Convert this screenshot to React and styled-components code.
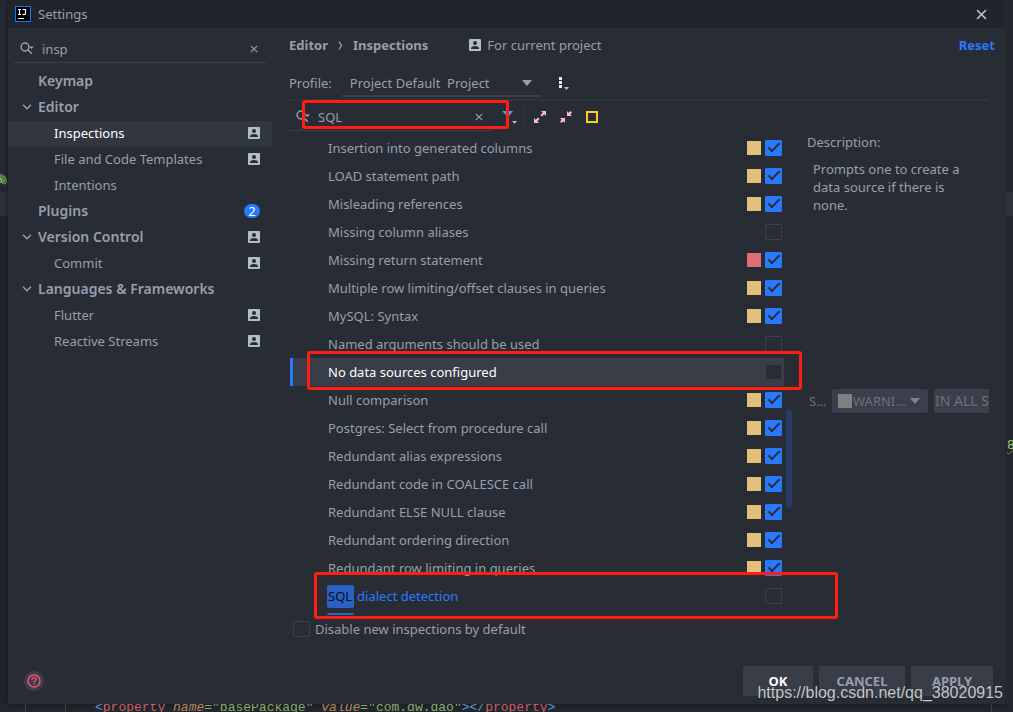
import styled, { createGlobalStyle } from 'styled-components';

const treeItems = [
  { label: 'Keymap', level: 0 },
  { label: 'Editor', level: 0, open: true },
  { label: 'Inspections', level: 1, project: true, selected: true },
  { label: 'File and Code Templates', level: 1, project: true },
  { label: 'Intentions', level: 1 },
  { label: 'Plugins', level: 0, count: 2 },
  { label: 'Version Control', level: 0, open: true, project: true },
  { label: 'Commit', level: 1, project: true },
  { label: 'Languages & Frameworks', level: 0, open: true },
  { label: 'Flutter', level: 1, project: true },
  { label: 'Reactive Streams', level: 1, project: true },
];

const WARNING = '#e5c07b';
const ERROR = '#e06c75';

const inspections = [
  { name: 'Insertion into generated columns', severity: WARNING },
  { name: 'LOAD statement path', severity: WARNING },
  { name: 'Misleading references', severity: WARNING },
  { name: 'Missing column aliases' },
  { name: 'Missing return statement', severity: ERROR },
  { name: 'Multiple row limiting/offset clauses in queries', severity: WARNING },
  { name: 'MySQL: Syntax', severity: WARNING },
  { name: 'Named arguments should be used' },
  { name: 'No data sources configured', selected: true },
  { name: 'Null comparison', severity: WARNING },
  { name: 'Postgres: Select from procedure call', severity: WARNING },
  { name: 'Redundant alias expressions', severity: WARNING },
  { name: 'Redundant code in COALESCE call', severity: WARNING },
  { name: 'Redundant ELSE NULL clause', severity: WARNING },
  { name: 'Redundant ordering direction', severity: WARNING },
  { name: 'Redundant row limiting in queries', severity: WARNING },
  { name: 'dialect detection', match: 'SQL' },
  { name: '', match: 'SQL' },
];

const ProjectIcon = () => (
  <svg width="12" height="12" viewBox="0 0 12 12" aria-hidden="true">
    <rect width="12" height="12" rx="1" fill="#b0bec5" />
    <circle cx="6" cy="4" r="2" fill="#282c34" />
    <path d="M2 10V9.2C2 7.8 4.4 7 6 7s4 .8 4 2.2v.8z" fill="#282c34" />
  </svg>
);

const SearchIcon = () => (
  <svg width="15" height="14" viewBox="0 0 15 14" fill="none" aria-hidden="true">
    <circle cx="5" cy="5" r="3.9" stroke="#979fad" strokeWidth="1.5" />
    <path d="M7.8 7.8l4 4" stroke="#979fad" strokeWidth="1.6" />
    <path d="M9 4.5h5L11.5 7z" fill="#979fad" />
  </svg>
);

const CloseIcon = ({ size = 8, color = '#979fad' }) => (
  <svg width={size} height={size} viewBox="0 0 10 10" aria-hidden="true">
    <path d="M1 1l8 8M9 1L1 9" stroke={color} strokeWidth="1.4" />
  </svg>
);

const ChevronIcon = () => (
  <svg width="10" height="6" viewBox="0 0 10 6" fill="none" aria-hidden="true">
    <path d="M1 .8l4 4 4-4" stroke="#979fad" strokeWidth="1.5" />
  </svg>
);

const SeparatorIcon = () => (
  <svg width="5" height="9" viewBox="0 0 5 9" fill="none" aria-hidden="true">
    <path d="M1 .5l2.500 4L1 8.500" stroke="#979fad" strokeWidth="1.3" />
  </svg>
);

const ArrowIcon = ({ color = '#979fad' }) => (
  <svg width="10" height="6" viewBox="0 0 10 6" aria-hidden="true">
    <path d="M0 0h10L5 6z" fill={color} />
  </svg>
);

const LogoIcon = () => (
  <svg width="16" height="16" viewBox="0 0 16 16" aria-hidden="true">
    <rect x=".5" y=".5" width="15" height="15" fill="#000" stroke="#087cfa" />
    <path
      d="M3 3.500h3M4.500 3.500v5M3 8.500h3M7.500 3.500h3v3.700c0 1-.6 1.400-1.400 1.400-.7 0-1.200-.3-1.600-.8M3 12.500h6"
      fill="none"
      stroke="#fff"
      strokeWidth="1.2"
    />
  </svg>
);

const FilterIcon = () => (
  <svg width="16" height="16" viewBox="0 0 16 16" aria-hidden="true">
    <path d="M0 2h11L7 7v6H5V7z" fill="#42a5f5" />
    <path d="M10 12h5l-2.500 3z" fill="#b0bec5" />
  </svg>
);

const MoreIcon = () => (
  <svg width="12" height="16" viewBox="0 0 12 16" aria-hidden="true">
    <path d="M1 2h3v3H1zM1 6h3v3H1zM1 10h3v3H1z" fill="#e8eaf0" />
    <path d="M6 12h5l-2.500 3z" fill="#b0bec5" />
  </svg>
);

const ExpandIcon = () => (
  <svg width="12" height="12" viewBox="0 0 12 12" aria-hidden="true">
    <path
      d="M7 0h5v5l-1.700-1.700L8 5.600 6.400 4l2.300-2.300zM5 12H0V7l1.700 1.700L4 6.400 5.600 8l-2.300 2.300z"
      fill="#f8bbd0"
    />
  </svg>
);

const CollapseIcon = () => (
  <svg width="12" height="12" viewBox="0 0 12 12" aria-hidden="true">
    <path
      d="M7 5V0l1.700 1.700L10.400 0 12 1.600l-1.700 1.700L12 5zM5 7v5l-1.700-1.700L1.600 12 0 10.400l1.700-1.700L0 7z"
      fill="#f8bbd0"
    />
  </svg>
);

const HelpIcon = () => (
  <svg width="14" height="14" viewBox="0 0 14 14" fill="none" aria-hidden="true">
    <circle cx="7" cy="7" r="6" stroke="#ef5370" strokeWidth="1.5" />
    <path
      d="M5 5.700C5 4.400 5.800 3.700 7 3.700s2 .7 2 1.700c0 1.300-2 1.600-2 3.100M7 9.500v1.300"
      stroke="#ef5370"
      strokeWidth="1.3"
    />
  </svg>
);

const LeafIcon = () => (
  <svg width="7" height="14" viewBox="0 0 7 14" aria-hidden="true">
    <path d="M0 1c4 0 7 3 7 7 0 2-1 3-2 4L0 6z" fill="#4f8a3c" />
    <path d="M0 5l3 6M0 10l2-3" stroke="#b0bec5" fill="none" />
  </svg>
);

const SettingsTree = () => (
  <Sidebar>
    <SideSearch>
      <SearchIcon />
      <SearchInput type="text" aria-label="Search settings" defaultValue="insp" />
      <IconButton type="button" aria-label="Clear search">
        <CloseIcon />
      </IconButton>
    </SideSearch>
    <Tree>
      {treeItems.map((item) => (
        <TreeRow key={item.label} href="#" $level={item.level} $selected={item.selected}>
          <TreeToggle $level={item.level}>{item.open && <ChevronIcon />}</TreeToggle>
          <TreeLabel>{item.label}</TreeLabel>
          {item.project && <ProjectIcon />}
          {item.count && <Count>{item.count}</Count>}
        </TreeRow>
      ))}
    </Tree>
  </Sidebar>
);

const InspectionList = () => (
  <ListWrap>
    <List>
      {inspections.map((item, i) => (
        <InspectionRow key={i} $selected={item.selected}>
          <InspectionName htmlFor={`inspection-${i}`} $matched={item.match}>
            {item.match && <Match>{item.match}</Match>}
            {item.name}
          </InspectionName>
          {item.severity && <Severity $color={item.severity} />}
          <Checkbox
            id={`inspection-${i}`}
            type="checkbox"
            defaultChecked={!!item.severity}
            $filled={item.selected}
          />
        </InspectionRow>
      ))}
    </List>
    <ScrollTrack>
      <ScrollThumb />
    </ScrollTrack>
    <SelectedMark />
    <DialectMark />
  </ListWrap>
);

const Details = () => (
  <DetailsColumn>
    <div>Description:</div>
    <Description>Prompts one to create a data source if there is none.</Description>
    <SeverityRow>
      <SeverityLabel htmlFor="severity">S...</SeverityLabel>
      <SeverityBox>
        <Severity $color="#808080" />
        <SeveritySelect id="severity" disabled>
          <option>WARNI...</option>
        </SeveritySelect>
        <ArrowIcon color="#7d828c" />
      </SeverityBox>
      <ScopeButton type="button" disabled>
        IN ALL SCOPES
      </ScopeButton>
    </SeverityRow>
  </DetailsColumn>
);

const App = () => {
  return (
    <Ide>
      <GlobalStyle />
      <LeftGutter>
        <LeafIcon />
      </LeftGutter>
      <Dialog>
        <TitleBar>
          <LogoIcon />
          <Title>Settings</Title>
          <IconButton type="button" aria-label="Close">
            <CloseIcon size={11} color="#b0bec5" />
          </IconButton>
        </TitleBar>
        <DialogBody>
          <SettingsTree />
          <Content>
            <Breadcrumbs>
              <b>Editor</b>
              <SeparatorIcon />
              <b>Inspections</b>
              <Scope>
                <ProjectIcon />
                For current project
              </Scope>
              <Reset href="#">Reset</Reset>
            </Breadcrumbs>
            <ProfileRow>
              <label htmlFor="profile">Profile:</label>
              <ProfileBox>
                <ProfileSelect id="profile">
                  <option>Project Default&nbsp; Project</option>
                </ProfileSelect>
                <ArrowIcon />
              </ProfileBox>
              <IconButton type="button" aria-label="Profile actions">
                <MoreIcon />
              </IconButton>
            </ProfileRow>
            <Toolbar>
              <FilterSearch>
                <SearchIcon />
                <SearchInput type="text" aria-label="Search inspections" defaultValue="SQL" />
                <IconButton type="button" aria-label="Clear filter">
                  <CloseIcon />
                </IconButton>
                <SearchMark />
              </FilterSearch>
              <FilterButton type="button" aria-label="Filter">
                <FilterIcon />
              </FilterButton>
              <Actions>
                <IconButton type="button" aria-label="Expand all">
                  <ExpandIcon />
                </IconButton>
                <IconButton type="button" aria-label="Collapse all">
                  <CollapseIcon />
                </IconButton>
                <ResetSquare type="button" aria-label="Reset to empty" />
              </Actions>
            </Toolbar>
            <Panes>
              <InspectionList />
              <Details />
            </Panes>
            <DisableRow>
              <Checkbox type="checkbox" />
              Disable new inspections by default
            </DisableRow>
          </Content>
        </DialogBody>
        <Footer>
          <HelpButton type="button" aria-label="Help">
            <HelpIcon />
          </HelpButton>
          <FooterButton type="button" $width={70} $primary>
            OK
          </FooterButton>
          <FooterButton type="button" $width={86}>
            CANCEL
          </FooterButton>
          <FooterButton type="button" $width={82}>
            APPLY
          </FooterButton>
        </Footer>
      </Dialog>
      <RightGutter>8</RightGutter>
      <CodeLine>
        <code>
          <Token $color="#61afef">&lt;</Token>
          <Token $color="#e06c75">property </Token>
          <Token $color="#d19a66" $italic>name</Token>
          <Token $color="#98c379">="basePackage" </Token>
          <Token $color="#d19a66" $italic>value</Token>
          <Token $color="#98c379">="com.dw.dao"</Token>
          <Token $color="#61afef">&gt;&lt;/</Token>
          <Token $color="#e06c75">property</Token>
          <Token $color="#61afef">&gt;</Token>
        </code>
      </CodeLine>
      <Watermark>https://blog.csdn.net/qq_38020915</Watermark>
    </Ide>
  );
};
export default App;

const GlobalStyle = createGlobalStyle`
  * {
    box-sizing: border-box;
  }
  body {
    margin: 0;
    background: #23272e;
    color: #979fad;
    font-family: 'Noto Sans', 'Open Sans', sans-serif;
    font-size: 13px;
    line-height: 18px;
  }
  button,
  input,
  select {
    margin: 0;
    padding: 0;
    border: 0;
    background: none;
    color: inherit;
    font: inherit;
  }
  a {
    color: inherit;
    text-decoration: none;
  }
  svg {
    display: block;
    flex-shrink: 0;
  }
`;

const Ide = styled.div`
  position: relative;
  display: grid;
  grid-template-columns: 8px minmax(0, 1fr) 8px;
  grid-template-rows: 1fr 8px;
  min-height: 100vh;
  overflow: hidden;
`;

const LeftGutter = styled.div`
  padding-top: 173px;
  background: linear-gradient(#262a33 192px, #2c313c 192px, #2c313c 216px, #21252b 216px);
`;

const RightGutter = styled.div`
  padding: 436px 0 0 2px;
  overflow: hidden;
  background: linear-gradient(#23272e 192px, #2c313c 192px, #2c313c 216px, #23272e 216px);
  color: #98c379;
  font-family: 'DejaVu Sans Mono', monospace;
  text-decoration: underline wavy #8c8452 1px;
`;

const CodeLine = styled.div`
  grid-column: 1 / -1;
  display: flex;
  align-items: center;
  height: 8px;
  padding-left: 95px;
  overflow: hidden;
  white-space: pre;
  background: linear-gradient(#3a3f4b, #3a3f4b) 25px 0 / 1px 8px no-repeat,
    linear-gradient(#4a3a40, #4a3a40) 65px 0 / 1px 8px no-repeat,
    linear-gradient(#3a3f4b, #3a3f4b) 991px 0 / 1px 8px no-repeat;
  code {
    font-family: 'Liberation Mono', monospace;
    font-size: 13px;
  }
`;

const Token = styled.span`
  color: ${({ $color }) => $color};
  font-style: ${({ $italic }) => ($italic ? 'italic' : 'normal')};
  opacity: 0.85;
`;

const Dialog = styled.div`
  display: flex;
  flex-direction: column;
  background: #282c34;
  box-shadow: 0 0 6px rgba(0, 0, 0, 0.5);
`;

const TitleBar = styled.header`
  display: flex;
  align-items: center;
  height: 28px;
  padding: 0 18px 0 7px;
  background: #21252b;
`;

const Title = styled.span`
  flex: 1;
  padding-left: 7px;
`;

const IconButton = styled.button`
  display: flex;
  align-items: center;
  justify-content: center;
  cursor: pointer;
`;

const DialogBody = styled.div`
  flex: 1;
  display: grid;
  grid-template-columns: 264px minmax(0, 1fr);
`;

const Sidebar = styled.aside`
  padding-top: 8px;
`;

const SideSearch = styled.div`
  display: flex;
  align-items: center;
  height: 27px;
  margin: 0 6px;
  padding: 0 8px 0 6px;
  border-bottom: 1px solid #3a3f4b;
`;

const SearchInput = styled.input`
  flex: 1;
  min-width: 0;
  padding-left: 7px;
  outline: none;
`;

const Tree = styled.nav`
  padding-top: 6px;
`;

const TreeRow = styled.a`
  display: flex;
  align-items: center;
  height: 26px;
  padding: 0 12px 2px;
  background: ${({ $selected }) => ($selected ? '#323640' : 'transparent')};
  color: ${({ $selected }) => ($selected ? '#fff' : '#979fad')};
  font-size: ${({ $level }) => ($level ? 13 : 14)}px;
  font-weight: ${({ $level }) => ($level ? 400 : 600)};
`;

const TreeToggle = styled.span`
  width: ${({ $level }) => ($level ? 34 : 18)}px;
  padding-left: 2px;
`;

const TreeLabel = styled.span`
  flex: 1;
`;

const Count = styled.span`
  width: 16px;
  height: 14px;
  border-radius: 7px;
  background: #2979ff;
  color: #fff;
  font-size: 13px;
  font-weight: 400;
  line-height: 14px;
  text-align: center;
`;

const Content = styled.main`
  display: flex;
  flex-direction: column;
  padding: 6px 16px 0 17px;
`;

const Breadcrumbs = styled.div`
  display: flex;
  align-items: center;
  gap: 10px;
  height: 22px;
  margin-right: -6px;
`;

const Scope = styled.span`
  display: flex;
  align-items: center;
  gap: 6px;
  padding-left: 31px;
`;

const Reset = styled.a`
  margin-left: auto;
  color: #2979ff;
  font-weight: 700;
`;

const ProfileRow = styled.div`
  display: flex;
  align-items: center;
  gap: 10px;
  height: 45px;
  padding-top: 11px;
  border-bottom: 2px solid #2f333d;
`;

const ProfileBox = styled.div`
  display: flex;
  align-items: center;
  width: 200px;
  height: 28px;
  margin-right: 6px;
  padding: 2px 10px 0 8px;
  border-bottom: 2px solid #3a3f4b;
`;

const ProfileSelect = styled.select`
  flex: 1;
  appearance: none;
  outline: none;
`;

const Toolbar = styled.div`
  display: flex;
  align-items: center;
  height: 30px;
`;

const FilterSearch = styled.div`
  position: relative;
  display: flex;
  align-items: center;
  width: 202px;
  height: 30px;
  padding: 2px 8px 0 7px;
  border-bottom: 1px solid #3a3f4b;
`;

const Mark = styled.div`
  position: absolute;
  border: 3px solid #ff1e10;
  border-radius: 3px;
  pointer-events: none;
`;

const SearchMark = styled(Mark)`
  top: -1px;
  left: 13px;
  z-index: 1;
  width: 207px;
  height: 29px;
`;

const FilterButton = styled(IconButton)`
  margin-left: 11px;
  padding-top: 2px;
`;

const Actions = styled.div`
  display: flex;
  align-items: center;
  gap: 14px;
  height: 22px;
  margin-left: 5px;
  padding: 2px 0 0 10px;
  border-left: 1px solid #2f333d;
`;

const ResetSquare = styled.button`
  width: 12px;
  height: 12px;
  border: 2px solid #ffca28;
`;

const Panes = styled.div`
  display: grid;
  grid-template-columns: 504px minmax(0, 1fr);
  height: 484px;
`;

const ListWrap = styled.div`
  position: relative;
  display: flex;
  min-height: 0;
`;

const List = styled.div`
  flex: 1;
  padding: 3px 0 0 1px;
  overflow: hidden;
`;

const InspectionRow = styled.div`
  display: flex;
  align-items: center;
  gap: 4px;
  height: 28px;
  padding: 0 2px 0 35px;
  border-left: 3px solid ${({ $selected }) => ($selected ? '#2979ff' : 'transparent')};
  background: ${({ $selected }) => ($selected ? '#383d48' : 'transparent')};
  color: ${({ $selected }) => ($selected ? '#fff' : '#979fad')};
`;

const InspectionName = styled.label`
  flex: 1;
  color: ${({ $matched }) => ($matched ? '#2979ff' : 'inherit')};
`;

const Match = styled.mark`
  display: inline-block;
  margin: 0 3px 0 -1px;
  padding: 2px 2px 3px 1px;
  border-radius: 2px;
  background: #2962c4;
  color: #0a0e16;
`;

const Severity = styled.span`
  width: 14px;
  height: 14px;
  flex-shrink: 0;
  background: ${({ $color }) => $color};
`;

const Checkbox = styled.input`
  appearance: none;
  width: 17px;
  height: 16px;
  flex-shrink: 0;
  border: 1px solid ${({ $filled }) => ($filled ? '#383d48' : '#3a3f4b')};
  border-radius: 1px;
  background: #282c34;
  &:checked {
    display: flex;
    justify-content: center;
    border-color: #2979ff;
    background: #2979ff;
  }
  &:checked::before {
    content: '';
    width: 10px;
    height: 4px;
    margin-top: 2px;
    border-bottom: 2px solid #282c34;
    border-left: 2px solid #282c34;
    transform: rotate(-45deg);
  }
`;

const ScrollTrack = styled.div`
  width: 9px;
  padding: 279px 1px 0 2px;
`;

const ScrollThumb = styled.div`
  height: 98px;
  border-radius: 3px;
  background: #283c62;
`;

const SelectedMark = styled(Mark)`
  top: 220px;
  left: 18px;
  width: 495px;
  height: 39px;
`;

const DialectMark = styled(Mark)`
  top: 441px;
  left: 25px;
  width: 524px;
  height: 47px;
`;

const DetailsColumn = styled.section`
  display: flex;
  flex-direction: column;
  padding: 2px 0 0 14px;
`;

const Description = styled.p`
  margin: 9px 0 0;
  padding: 0 16px 0 6px;
`;

const SeverityRow = styled.div`
  display: flex;
  align-items: center;
  gap: 6px;
  height: 24px;
  margin-top: 175px;
  padding-left: 2px;
  overflow: hidden;
  color: #6c727d;
`;

const SeverityLabel = styled.label`
  width: 17px;
  flex-shrink: 0;
`;

const SeverityBox = styled.div`
  display: flex;
  align-items: center;
  width: 96px;
  height: 24px;
  flex-shrink: 0;
  padding: 0 8px 0 6px;
  border-radius: 2px;
  background: #3a3f4b;
`;

const SeveritySelect = styled.select`
  flex: 1;
  min-width: 0;
  padding-left: 1px;
  appearance: none;
  opacity: 1;
`;

const ScopeButton = styled.button`
  height: 24px;
  flex-shrink: 0;
  padding: 0 1px;
  border-radius: 2px;
  background: #3a3f4b;
  font-size: 14px;
`;

const DisableRow = styled.label`
  display: flex;
  align-items: center;
  gap: 5px;
  height: 28px;
  padding-left: 4px;
`;

const Footer = styled.footer`
  display: flex;
  align-items: center;
  gap: 6px;
  padding: 0 12px 8px 16px;
`;

const HelpButton = styled(IconButton)`
  width: 20px;
  height: 20px;
  margin-right: auto;
  border-radius: 50%;
  background: #3a3f4b;
`;

const FooterButton = styled.button`
  width: ${({ $width }) => $width}px;
  height: 30px;
  background: #383d48;
  color: ${({ $primary }) => ($primary ? '#fff' : '#979fad')};
  font-weight: 700;
`;

const Watermark = styled.div`
  position: absolute;
  right: 10px;
  bottom: 10px;
  color: #c4c6ca;
  font-family: 'Liberation Sans', sans-serif;
  font-size: 16px;
  text-shadow: 0 0 2px #282c34;
`;
